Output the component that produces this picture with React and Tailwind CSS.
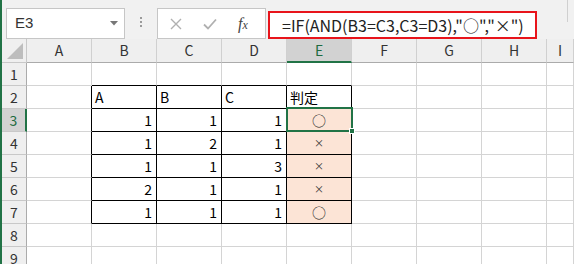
import { Fragment } from "react";

const COLS = ["A", "B", "C", "D", "E", "F", "G", "H", "I"];

// table data B2:E7
const table = {
  2: ["A", "B", "C", "判定"],
  3: [1, 1, 1, "○"],
  4: [1, 2, 1, "×"],
  5: [1, 1, 3, "×"],
  6: [2, 1, 1, "×"],
  7: [1, 1, 1, "○"],
};

const font = { fontFamily: '"Noto Sans CJK JP", "Liberation Sans", sans-serif' };

const Cell = ({ row, colIdx }) => {
  const inTable = row >= 2 && row <= 7 && colIdx >= 1 && colIdx <= 4;
  const value = inTable ? table[row][colIdx - 1] : null;
  const isResult = inTable && colIdx === 4 && row >= 3;

  // border colours: black around the table, gray gridlines elsewhere
  const rightBlack = row >= 2 && row <= 7 && colIdx >= 0 && colIdx <= 4;
  const bottomBlack = row >= 1 && row <= 7 && colIdx >= 1 && colIdx <= 4;

  let align = "justify-start pl-[3px]";
  if (typeof value === "number") align = "justify-end pr-[4px]";
  if (isResult) align = "justify-center";

  return (
    <div
      className={`h-[23px] flex items-center border-r border-b text-[14px] leading-none text-black ${align} ${
        rightBlack ? "border-r-black" : "border-r-[#d4d4d4]"
      } ${bottomBlack ? "border-b-black" : "border-b-[#d4d4d4]"} ${
        isResult ? "bg-[#fce4d6]" : "bg-white"
      }`}
    >
      {value === "○" && <span className="text-[14px] text-[#222]">○</span>}
      {value === "×" && <span className="text-[10px] text-[#333]">×</span>}
      {value !== null && value !== "○" && value !== "×" && <span>{value}</span>}
    </div>
  );
};

const FormulaBar = () => (
  <div className="h-[47px] flex bg-[#f1f1f1]">
    {/* name box */}
    <div className="ml-[4px] mt-[8px] w-[119px] h-[31px] bg-white border border-[#c6c6c6] flex items-center justify-between pl-[8px] pr-[6px]">
      <span className="text-[15px] text-[#333]" style={{ fontFamily: '"Liberation Sans", sans-serif' }}>E3</span>
      <svg width="8" height="5" viewBox="0 0 8 5"><path d="M0 0h8L4 4.5z" fill="#777" /></svg>
    </div>
    {/* splitter dots */}
    <div className="w-[32px] flex flex-col items-center justify-center gap-[2px] pt-[4px]">
      <span className="w-[2px] h-[2px] bg-[#9a9a9a]" />
      <span className="w-[2px] h-[2px] bg-[#9a9a9a]" />
      <span className="w-[2px] h-[2px] bg-[#9a9a9a]" />
    </div>
    {/* cancel / enter / fx */}
    <div className="mt-[8px] w-[109px] h-[31px] bg-white border border-[#c6c6c6] flex items-center pl-[12px] gap-[21px]">
      <svg width="12" height="12" viewBox="0 0 12 12">
        <path d="M1 1L11 11M11 1L1 11" stroke="#b0b0b0" strokeWidth="1.4" />
      </svg>
      <svg width="14" height="12" viewBox="0 0 14 12">
        <path d="M1 6.5L5 10.5L13 1.5" stroke="#b0b0b0" strokeWidth="1.8" fill="none" />
      </svg>
      <span className="italic text-[16px] text-[#444]" style={{ fontFamily: '"Liberation Serif", serif' }}>
        f<span className="text-[12px]">x</span>
      </span>
    </div>
    {/* formula input */}
    <div className="ml-[2px] mt-[11px] w-[269px] h-[28px] bg-white border-2 border-[#e8141b] flex items-center pl-[12px]">
      <span className="text-[16px] text-[#222] whitespace-nowrap" style={font}>
        =IF(AND(B3=C3,C3=D3),"○","×")
      </span>
    </div>
    <div className="flex-1 flex justify-end pr-[6px]">
      <div className="w-px h-[22px] bg-[#d0d0d0]" />
    </div>
  </div>
);

const App = () => {
  const rows = [1, 2, 3, 4, 5, 6, 7, 8, 9];

  return (
    <div className="w-[574px] h-[264px] overflow-hidden flex bg-[#f1f1f1]" style={font}>
      <div className="w-[2px] bg-[#217346] shrink-0" />
      <div className="flex-1 flex flex-col">
        <FormulaBar />
        <div className="relative grid grid-cols-[25px_repeat(8,65px)_1fr]">
          {/* header row */}
          <div className="h-[24px] border-r border-b border-[#c8c8c8] bg-[#efefef] flex items-end justify-end pr-[3px] pb-[3px]">
            <svg width="16" height="16" viewBox="0 0 16 16"><path d="M16 0V16H0z" fill="#bdbdbd" /></svg>
          </div>
          {COLS.map((c) => (
            <div
              key={c}
              className={`h-[24px] flex items-center justify-center text-[14px] border-r border-[#d0d0d0] ${
                c === "E"
                  ? "bg-[#d2d2d2] border-b-2 border-b-[#217346] text-[#1d6b40]"
                  : "bg-[#efefef] border-b border-b-[#ababab] text-[#333]"
              }`}
            >
              {c}
            </div>
          ))}

          {rows.map((r) => (
            <Fragment key={r}>
              <div
                className={`h-[23px] flex items-center justify-center text-[14px] border-b border-b-[#c8c8c8] ${
                  r === 3
                    ? "bg-[#d2d2d2] border-r-2 border-r-[#217346] text-[#1d6b40]"
                    : "bg-[#efefef] border-r border-r-[#ababab] text-[#333]"
                }`}
              >
                {r}
              </div>
              {COLS.map((c, i) => (
                <Cell key={c} row={r} colIdx={i} />
              ))}
            </Fragment>
          ))}

          {/* active cell E3 */}
          <div className="absolute left-[284px] top-[68px] w-[67px] h-[25px] border-2 border-[#217346] pointer-events-none" />
          <div className="absolute left-[347px] top-[89px] w-[6px] h-[6px] bg-[#217346] border border-white" />
        </div>
      </div>
    </div>
  );
};

export default App;
